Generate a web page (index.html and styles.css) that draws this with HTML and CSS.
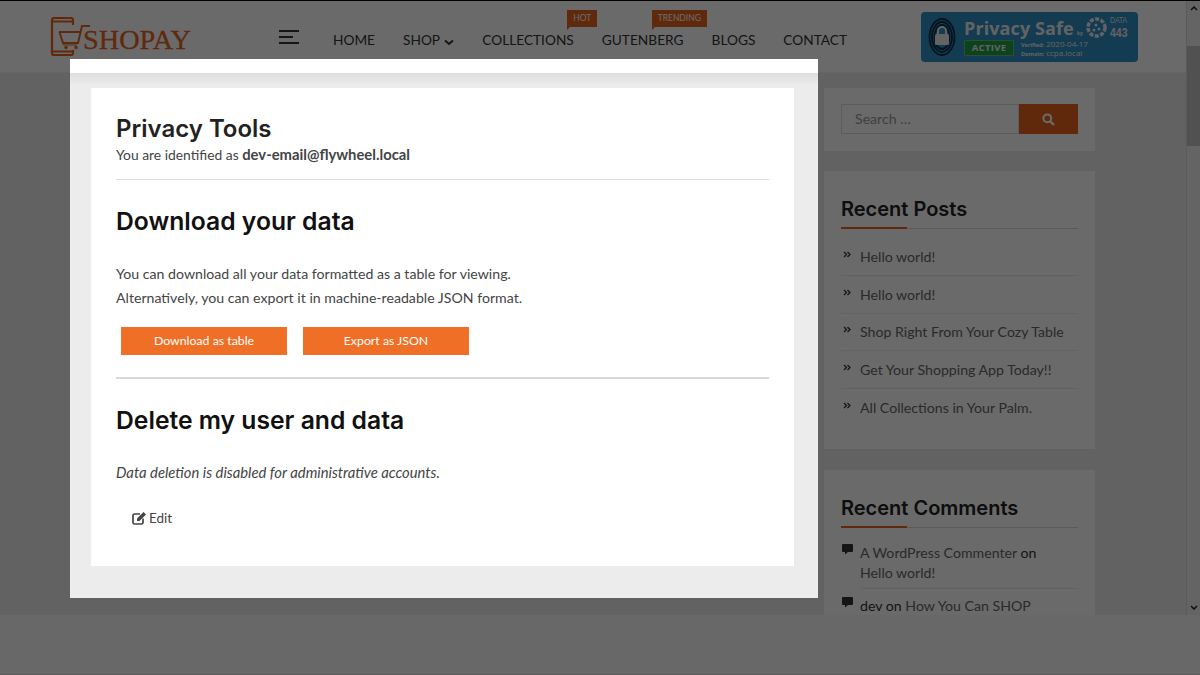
FILE: index.html
```html
<!DOCTYPE html>
<html lang="en">
<head>
<meta charset="utf-8">
<title>Privacy Tools</title>
<link rel="stylesheet" href="styles.css">
</head>
<body>
<div class="viewport">
  <div class="frame">
    <div class="site">
      <header class="site-header">
        <a class="logo">
          <svg class="logo-mark" width="50" height="40" viewBox="0 0 50 40" fill="none" stroke="#e8641f">
            <path d="M23 8V3Q23 1 21 1H4Q2 1 2 3V36Q2 38 4 38H21Q23 38 23 36V33" stroke-width="2.200"/>
            <path d="M2 4.500H23M2 34.500H23" stroke-width="2"/>
            <path d="M9 15H31M40 9H32L28 26H13L9.500 15" stroke-width="2"/>
            <path d="M13 26L14 28H27" stroke-width="1.200"/>
            <circle cx="16" cy="30.500" r="1.700" fill="#e8641f" stroke="none"/>
            <circle cx="26" cy="30.500" r="1.700" fill="#e8641f" stroke="none"/>
          </svg>
          <span class="logo-text">SHOPAY</span>
        </a>
        <span class="burger"><i class="b1"></i><i class="b2"></i><i class="b3"></i></span>
        <nav class="nav">
          <a>HOME</a>
          <a>SHOP <svg class="caret" width="10" height="7" viewBox="0 0 10 7"><path d="M1 1.500L5 5L9 1.500" fill="none" stroke="#333" stroke-width="2"/></svg></a>
          <a class="tagged">COLLECTIONS<span class="tag tag-hot">HOT</span></a>
          <a class="tagged">GUTENBERG<span class="tag tag-trend">TRENDING</span></a>
          <a>BLOGS</a>
          <a>CONTACT</a>
        </nav>
        <div class="badge">
          <svg class="badge-lock" width="28" height="38" viewBox="0 0 28 38">
            <g fill="none" stroke="#0d2f44" stroke-width="1.800">
              <ellipse cx="14" cy="19" rx="12.500" ry="18"/>
              <ellipse cx="14" cy="19" rx="10" ry="15"/>
              <ellipse cx="14" cy="19" rx="7.500" ry="12"/>
            </g>
            <rect x="7" y="16" width="14" height="11" rx="1.500" fill="#eee"/>
            <path d="M10 16V13A4 4 0 0 1 18 13V16" fill="none" stroke="#eee" stroke-width="2"/>
          </svg>
          <div class="badge-main">
            <div class="badge-title">Privacy Safe<small>by</small></div>
            <div class="badge-row">
              <span class="badge-active">ACTIVE</span>
              <div class="badge-meta">
                <div><b>Verified:</b> 2020-04-17</div>
                <div><b>Domain:</b> ccpa.local</div>
              </div>
            </div>
          </div>
          <svg class="badge-data" width="21" height="21" viewBox="0 0 21 21">
            <circle cx="10.500" cy="10.500" r="8.500" fill="none" stroke="#eee" stroke-width="3.500" stroke-dasharray="4 1.500"/>
            <circle cx="10" cy="8" r="1.500" fill="#eee"/><circle cx="8" cy="13" r="1.500" fill="#eee"/><circle cx="13" cy="12" r="1.500" fill="#eee"/>
          </svg>
          <div class="badge-443"><span>DATA</span><b>443</b></div>
        </div>
      </header>
      <div class="site-body">
        <aside class="sidebar">
          <section class="widget widget-search">
            <div class="search">
              <span class="search-input">Search …</span>
              <span class="search-btn"><svg width="13" height="13" viewBox="0 0 13 13"><circle cx="5.300" cy="5.300" r="3.900" fill="none" stroke="#fff" stroke-width="2"/><path d="M8.300 8.300L12 12" stroke="#fff" stroke-width="2.400"/></svg></span>
            </div>
          </section>
          <section class="widget widget-posts">
            <h3 class="widget-title">Recent Posts</h3>
            <ul class="list">
              <li><svg class="chev" width="8" height="7" viewBox="0 0 8 7"><path d="M1 1L3.500 3.500L1 6M4.500 1L7 3.500L4.500 6" fill="none" stroke="#333" stroke-width="1.300"/></svg><a>Hello world!</a></li>
              <li><svg class="chev" width="8" height="7" viewBox="0 0 8 7"><path d="M1 1L3.500 3.500L1 6M4.500 1L7 3.500L4.500 6" fill="none" stroke="#333" stroke-width="1.300"/></svg><a>Hello world!</a></li>
              <li><svg class="chev" width="8" height="7" viewBox="0 0 8 7"><path d="M1 1L3.500 3.500L1 6M4.500 1L7 3.500L4.500 6" fill="none" stroke="#333" stroke-width="1.300"/></svg><a>Shop Right From Your Cozy Table</a></li>
              <li><svg class="chev" width="8" height="7" viewBox="0 0 8 7"><path d="M1 1L3.500 3.500L1 6M4.500 1L7 3.500L4.500 6" fill="none" stroke="#333" stroke-width="1.300"/></svg><a>Get Your Shopping App Today!!</a></li>
              <li><svg class="chev" width="8" height="7" viewBox="0 0 8 7"><path d="M1 1L3.500 3.500L1 6M4.500 1L7 3.500L4.500 6" fill="none" stroke="#333" stroke-width="1.300"/></svg><a>All Collections in Your Palm.</a></li>
            </ul>
          </section>
          <section class="widget widget-comments">
            <h3 class="widget-title">Recent Comments</h3>
            <ul class="comments">
              <li><svg class="bubble" width="11" height="11" viewBox="0 0 11 11"><path d="M1 0H10Q11 0 11 1V7Q11 8 10 8H6L3 10.500V8H1Q0 8 0 7V1Q0 0 1 0Z" fill="#333"/></svg><p><a>A WordPress Commenter</a> on <a>Hello world!</a></p></li>
              <li><svg class="bubble" width="11" height="11" viewBox="0 0 11 11"><path d="M1 0H10Q11 0 11 1V7Q11 8 10 8H6L3 10.500V8H1Q0 8 0 7V1Q0 0 1 0Z" fill="#333"/></svg><p>dev on <a>How You Can SHOP</a></p></li>
            </ul>
          </section>
        </aside>
      </div>
    </div>
    <div class="scrollbar">
      <span class="sb-btn"><svg width="8" height="5" viewBox="0 0 8 5"><path d="M1 4L4 1L7 4" fill="none" stroke="#222" stroke-width="1.500"/></svg></span>
      <span class="sb-gap"></span>
      <span class="sb-thumb"></span>
      <span class="sb-rest"></span>
      <span class="sb-btn"><svg width="8" height="5" viewBox="0 0 8 5"><path d="M1 1L4 4L7 1" fill="none" stroke="#222" stroke-width="1.500"/></svg></span>
    </div>
  </div>
  <div class="band"></div>
  <div class="overlay"></div>
  <div class="modal">
    <div class="modal-top"></div>
    <div class="modal-body">
      <main class="card">
        <h1 class="title">Privacy Tools</h1>
        <p class="identified">You are identified as <strong>dev-email@flywheel.local</strong></p>
        <hr class="rule rule-first">
        <h2 class="section-title section-download">Download your data</h2>
        <p class="copy">You can download all your data formatted as a table for viewing.</p>
        <p class="copy">Alternatively, you can export it in machine-readable JSON format.</p>
        <div class="buttons">
          <a class="button">Download as table</a>
          <a class="button">Export as JSON</a>
        </div>
        <hr class="rule rule-second">
        <h2 class="section-title section-delete">Delete my user and data</h2>
        <p class="copy note"><em>Data deletion is disabled for administrative accounts.</em></p>
        <a class="edit">
          <svg width="15" height="14" viewBox="0 0 15 14"><path d="M11 7.500V11.500Q11 13 9.500 13H2.500Q1 13 1 11.500V4.500Q1 3 2.500 3H8" fill="none" stroke="#444" stroke-width="1.700"/><path d="M5 7.500L11.500 1L14 3.500L7.500 10H5Z" fill="#444"/></svg>
          Edit
        </a>
      </main>
    </div>
  </div>
</div>
</body>
</html>
```
FILE: styles.css
```css
* { box-sizing: border-box; }
html, body { margin: 0; padding: 0; }
body { font-family: Lato, "Noto Sans", sans-serif; color: #444; }
.viewport { position: relative; width: 1200px; height: 675px; overflow: hidden; background: #fff; }

.frame { display: flex; height: 615px; border-top: 1px solid #000; }
.site { flex: 1; min-width: 0; overflow: hidden; background: #ebebeb; }

.site-header { display: flex; align-items: flex-start; height: 72px; background: #fff; border-bottom: 1px solid #f2f2f2; position: relative; }
.logo { display: flex; align-items: flex-end; margin: 16px 0 0 50px; width: 141px; height: 40px; }
.logo-mark { flex: none; margin-right: -17px; }
.logo-text { font-family: "Liberation Serif", serif; font-size: 28.300px; line-height: 30px; color: #e8641f; position: relative; top: -2px; -webkit-text-stroke: .3px #e8641f; }
.burger { display: flex; flex-direction: column; gap: 4px; width: 20px; margin: 29px 0 0 88px; }
.burger i { display: block; height: 2px; background: #333; }
.b1 { width: 20px; } .b2 { width: 14px; } .b3 { width: 20px; }
.nav { display: flex; gap: 28px; margin: 30px 0 0 34px; font-size: 13.700px; line-height: 18px; color: #333; }
.nav a { display: block; white-space: nowrap; }
.tagged { position: relative; }
.caret { margin-left: 1px; position: relative; top: 1px; }
.tag { position: absolute; top: -21px; height: 17px; background: #e8641f; color: #fff; font-size: 8.500px; line-height: 17px; text-align: center; }
.tag::after { content: ""; position: absolute; left: 0; top: 17px; border-top: 3px solid #e8641f; border-right: 3px solid transparent; }
.tag-hot { left: 85px; width: 30px; }
.tag-trend { left: 50px; width: 55px; }

.badge { position: absolute; left: 921px; top: 11px; width: 217px; height: 50px; border-radius: 4px; background: #2e8ec4; display: flex; align-items: flex-start; color: #eee; }
.badge-lock { flex: none; margin: 6px 0 0 7px; }
.badge-main { margin: 5px 0 0 8px; width: 122px; }
.badge-title { font-family: "Open Sans", sans-serif; font-weight: 700; font-size: 18px; line-height: 22px; white-space: nowrap; letter-spacing: .1px; }
.badge-title small { font-size: 5px; line-height: 0; font-weight: 700; margin-left: 3px; }
.badge-row { display: flex; gap: 7px; margin-top: 1px; }
.badge-active { flex: none; width: 50px; height: 16px; background: #1fa04a; border: 1px solid #69c069; border-radius: 1px; font: 700 9.500px/14px "Open Sans", sans-serif; letter-spacing: .3px; text-align: center; }
.badge-meta { font: 8px/8px "Open Sans", sans-serif; white-space: nowrap; }
.badge-meta b { font-size: 5.500px; }
.badge-data { flex: none; margin: 5px 0 0 0; }
.badge-443 { display: flex; flex-direction: column; margin: 3px 0 0 3px; font: 10px/10px "Liberation Sans", sans-serif; }
.badge-443 span { font-size: 8.500px; line-height: 10px; transform: scaleX(.8); transform-origin: left; }
.badge-443 b { font-size: 13.500px; line-height: 15.500px; transform: scaleX(.78); transform-origin: left; }

.site-body { display: flex; justify-content: flex-end; padding: 15px 91px 0 0; }
.sidebar { width: 271px; display: flex; flex-direction: column; gap: 20px; }
.widget { background: #fff; padding: 16px 17px 0 17px; }
.widget-search { height: 63px; }
.search { display: flex; height: 30px; }
.search-input { flex: 1; border: 1px solid #ddd; padding: 0 13px; font-size: 14.150px; line-height: 28px; color: #999; }
.search-btn { display: flex; align-items: center; justify-content: center; width: 59px; background: #e8641f; }
.widget-posts { height: 278px; padding-top: 25px; }
.widget-comments { margin-top: 1px; padding-top: 25px; height: 300px; }
.widget-title { margin: 0; height: 33px; font-family: Inter, Roboto, sans-serif; font-weight: 600; font-size: 20px; line-height: 26px; color: #222; border-bottom: 1px solid #d8d8d8; position: relative; }
.widget-title::after { content: ""; position: absolute; left: 0; bottom: -1px; width: 66px; height: 2px; background: #e8641f; }
.list { list-style: none; margin: 9.500px 0 0; padding: 0; font-size: 14.150px; }
.list li { display: flex; align-items: center; height: 37.500px; border-bottom: 1px solid #eee; }
.list li:last-child { border-bottom: 0; }
.list .chev { flex: none; margin: -4px 9px 0 2px; }
.list a, .comments a { color: #666; }
.comments { list-style: none; margin: 9px 0 0; padding: 0; font-size: 14.150px; line-height: 20px; color: #333; }
.comments li { display: flex; align-items: flex-start; padding: 6px 0 0; }
.comments li + li { padding-top: 7px; }
.comments li p { margin: 0; flex: 1; padding: 0 10px 5px 0; border-bottom: 1px solid #eee; }
.comments li + li p { border-bottom: 0; }
.bubble { flex: none; margin: 1px 7px 0 1px; }

.scrollbar { flex: none; width: 14px; display: flex; flex-direction: column; align-items: stretch; border-left: 1px solid #d8d8d8; background: #f1f1f1; }
.sb-btn { display: flex; align-items: center; justify-content: center; height: 15px; }
.sb-gap { height: 30px; }
.sb-thumb { height: 100px; background: #c4c4c4; }
.sb-rest { flex: 1; }

.band { height: 60px; background: #fafafa; border-bottom: 1px solid #dcdcdc; }
.overlay { position: absolute; inset: 0; background: rgba(0, 0, 0, .585); }

.modal { position: absolute; left: 70px; top: 59px; width: 748px; height: 539px; background: #ececec; display: flex; flex-direction: column; }
.modal-top { height: 14px; background: #fff; flex: none; }
.modal-body { flex: 1; padding: 15px 24px 32px 21px; background: linear-gradient(#dedede, #ececec 12px); }
.card { height: 100%; background: #fff; padding: 27px 25px 0; }
.title { margin: 0; font-family: Inter, Roboto, sans-serif; font-weight: 600; font-size: 24px; line-height: 28px; color: #222; }
.identified { margin: 1px 0 0; height: 20px; font-size: 13.850px; line-height: 20px; color: #444; }
.identified strong { font-weight: 700; font-size: 14.800px; }
.rule { border: 0; height: 1px; margin: 0; background: #ddd; }
.rule-first { margin-top: 15px; }
.section-title { margin: 0; font-family: Inter, Roboto, sans-serif; font-weight: 600; font-size: 24.700px; line-height: 30px; color: #111; }
.section-download { margin-top: 26px; margin-bottom: 26px; }
.copy { margin: 0; font-size: 14.150px; line-height: 24px; color: #444; }
.buttons { display: flex; gap: 16px; margin: 17px 0 0 5px; }
.button { width: 166px; height: 28px; background: #f06f26; color: #fff; font-size: 12.300px; line-height: 28px; text-align: center; }
.rule-second { height: 2px; margin-top: 22px; background: #d8d8d8; }
.section-delete { margin-top: 26px; margin-bottom: 25px; }
.note { font-size: 14.800px; color: #444; }
.edit { display: inline-flex; align-items: center; gap: 2px; margin: 24px 0 0 16px; font-size: 13.500px; line-height: 20px; color: #444; }
```
